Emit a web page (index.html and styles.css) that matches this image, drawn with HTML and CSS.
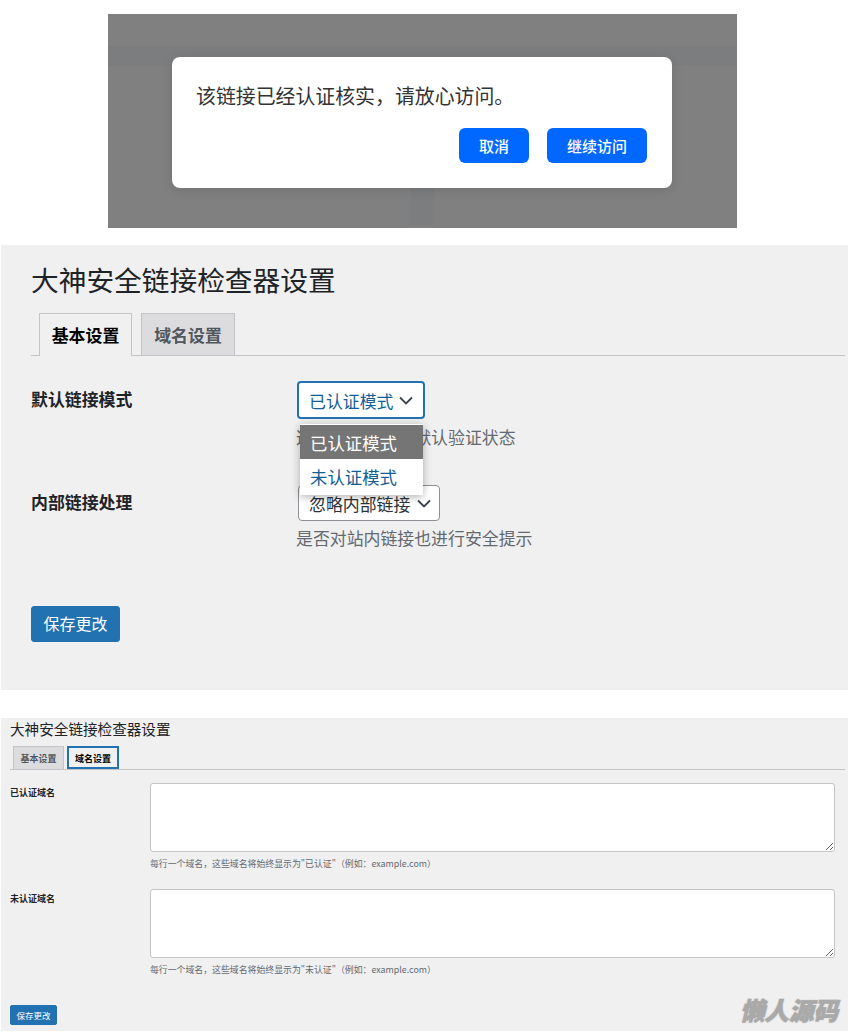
FILE: index.html
```html
<!DOCTYPE html>
<html lang="zh-CN">
<head>
<meta charset="utf-8">
<title>大神安全链接检查器设置</title>
<link rel="stylesheet" href="styles.css">
</head>
<body>
<section class="modal-shot">
  <div class="modal-band"></div>
  <div class="modal-stub"></div>
  <div class="dialog">
    <p class="dialog-text">该链接已经认证核实，请放心访问。</p>
    <div class="dialog-actions">
      <button class="dialog-btn btn-cancel">取消</button>
      <button class="dialog-btn btn-go">继续访问</button>
    </div>
  </div>
</section>

<section class="panel panel-basic">
  <h1 class="title">大神安全链接检查器设置</h1>
  <nav class="tabs">
    <a class="tab tab-active">基本设置</a>
    <a class="tab tab-idle">域名设置</a>
  </nav>
  <div class="row row-first">
    <div class="label">默认链接模式</div>
    <div class="field">
      <div class="select select-focus">已认证模式
        <svg class="chev" viewBox="0 0 16 16"><path d="M2 5.5 8 11.5l6-6" fill="none" stroke="#3c434a" stroke-width="1.8"/></svg>
      </div>
      <p class="desc desc-first">这将决定链接的默认验证状态</p>
      <div class="menu">
        <div class="menu-item menu-selected">已认证模式</div>
        <div class="menu-item">未认证模式</div>
      </div>
    </div>
  </div>
  <div class="row row-second">
    <div class="label label-second">内部链接处理</div>
    <div class="field">
      <div class="select select-plain">忽略内部链接
        <svg class="chev" viewBox="0 0 16 16"><path d="M2 5.5 8 11.5l6-6" fill="none" stroke="#3c434a" stroke-width="1.8"/></svg>
      </div>
      <p class="desc desc-second">是否对站内链接也进行安全提示</p>
    </div>
  </div>
  <button class="save">保存更改</button>
</section>

<section class="panel panel-domain">
  <h2 class="title-sm">大神安全链接检查器设置</h2>
  <nav class="tabs-sm">
    <a class="tab-sm">基本设置</a>
    <a class="tab-sm tab-sm-active">域名设置</a>
  </nav>
  <div class="row-sm row-sm-first">
    <div class="label-sm">已认证域名</div>
    <div class="field-sm">
      <textarea class="area"></textarea>
      <p class="desc-sm">每行一个域名，这些域名将始终显示为"已认证"（例如：example.com）</p>
    </div>
  </div>
  <div class="row-sm">
    <div class="label-sm">未认证域名</div>
    <div class="field-sm">
      <textarea class="area"></textarea>
      <p class="desc-sm">每行一个域名，这些域名将始终显示为"未认证"（例如：example.com）</p>
    </div>
  </div>
  <button class="save-sm">保存更改</button>
  <div class="watermark">懒人源码</div>
</section>
</body>
</html>
```
FILE: styles.css
```css
* { box-sizing: border-box; }
html, body { margin: 0; padding: 0; }
body {
  width: 850px;
  height: 1035px;
  overflow: hidden;
  background: #fff;
  font-family: "Noto Sans CJK SC", "Noto Sans", sans-serif;
  color: #1d2327;
}
p, h1, h2 { margin: 0; font-weight: 400; }

/* top modal shot */
.modal-shot {
  position: relative;
  width: 629px;
  height: 214px;
  padding-top: 32px;
  margin: 14px 0 0 108px;
  background: #808080;
  overflow: hidden;
}
.modal-band { height: 20px; background: #7c7d7e; }
.modal-stub { position: absolute; left: 302px; top: 170px; width: 24px; height: 41px; background: #7c7d7e; }
.dialog {
  position: absolute;
  left: 64px;
  top: 43px;
  width: 500px;
  height: 131px;
  padding: 24px 25px 0 24px;
  background: #fff;
  border-radius: 8px;
  box-shadow: 0 2px 12px rgba(0,0,0,.12);
}
.dialog-text { font-size: 19.9px; line-height: 30px; color: #333; }
.dialog-actions { display: flex; justify-content: flex-end; gap: 18px; margin-top: 17px; }
.dialog-btn {
  height: 35px;
  padding: 0;
  border: 0;
  border-radius: 6px;
  background: #0068ff;
  color: #fff;
  font: 500 15px/35px "Noto Sans CJK SC", sans-serif;
}
.btn-cancel { width: 70px; }
.btn-go { width: 100px; }

/* panels */
.panel { position: relative; background: #f0f0f1; margin-left: 1px; width: 847px; }
.panel-basic { height: 445px; margin-top: 17px; padding: 14px 0 0 30px; }
.title { font-size: 27.7px; line-height: 40px; color: #1d2327; }
.tabs {
  display: flex;
  gap: 9px;
  height: 43px;
  margin: 14px 3px 0 0;
  padding-left: 8px;
  border-bottom: 1px solid #c3c4c7;
}
.tab {
  height: 42px;
  border: 1px solid #c3c4c7;
  border-bottom: 0;
  color: #50575e;
  font-size: 16.9px;
  font-weight: 700;
  line-height: 41px;
  text-align: center;
}
.tab-idle { width: 94px; background: #dcdcde; }
.tab-active { width: 93px; height: 43px; background: #f0f0f1; color: #000; }
.row { display: grid; grid-template-columns: 266px 1fr; }
.row-first { margin-top: 25px; height: 104px; }
.row-second { height: 121px; }
.label { font-size: 16.9px; font-weight: 700; line-height: 36px; color: #1d2327; }
.label-second { line-height: 34px; }
.field { position: relative; }
.select {
  display: flex;
  align-items: center;
  justify-content: space-between;
  background: #fff;
  font-size: 16.9px;
  border-radius: 4px;
}
.select-focus {
  width: 128px;
  height: 38px;
  padding: 0 9px 0 10px;
  border: 2px solid #2271b1;
  color: #135e96;
}
.select-plain {
  width: 142px;
  height: 36px;
  margin-left: 1px;
  padding: 0 7px 0 10px;
  border: 1px solid #8c8f94;
  color: #2c3338;
}
.chev { width: 16px; height: 16px; flex: none; }
.desc { font-size: 16.9px; line-height: 24px; color: #646970; margin-left: -1px; }
.desc-first { margin-top: 6px; }
.desc-second { margin-top: 5px; }
.menu {
  position: absolute;
  z-index: 2;
  left: 3px;
  top: 43px;
  width: 123px;
  background: #fff;
  box-shadow: 0 2px 8px rgba(0,0,0,.3);
  padding-top: 1px;
}
.menu-item { height: 36px; padding-left: 10px; font-size: 17.4px; line-height: 36px; color: #135e96; }
.menu-selected { height: 34px; background: #757575; color: #fff; line-height: 36px; }
.save {
  display: block;
  width: 89px;
  height: 36px;
  padding: 0 0 2px;
  border: 1px solid #2271b1;
  border-radius: 3px;
  background: #2271b1;
  color: #fff;
  font: 400 16px/32px "Noto Sans CJK SC", sans-serif;
}

.panel-domain { height: 313px; margin-top: 28px; padding: 0 0 0 9px; }
.title-sm { font-size: 14.6px; line-height: 22px; color: #1d2327; }
.tabs-sm {
  display: flex;
  gap: 3px;
  height: 24px;
  margin: 6px 3px 0 0;
  padding-left: 3px;
  border-bottom: 1px solid #c3c4c7;
}
.tab-sm {
  width: 51px;
  height: 23px;
  border: 1px solid #c3c4c7;
  border-bottom: 0;
  background: #dcdcde;
  color: #50575e;
  font-size: 9px;
  font-weight: 700;
  line-height: 24px;
  text-align: center;
}
.tab-sm-active {
  width: 52px;
  border: 2px solid #2271b1;
  background: #f0f0f1;
  color: #000;
  line-height: 21px;
}
.row-sm { display: grid; grid-template-columns: 140px 1fr; height: 106px; }
.row-sm-first { margin-top: 13px; }
.label-sm { font-size: 9px; font-weight: 700; line-height: 20px; color: #1d2327; }
.field-sm { display: flex; flex-direction: column; }
.area {
  display: block;
  width: 685px;
  height: 69px;
  border: 1px solid #c3c4c7;
  border-radius: 3px;
  background: #fff;
  outline: 0;
}
.desc-sm { margin-top: 5px; font-size: 8.9px; line-height: 14px; color: #646970; }
.save-sm {
  display: block;
  width: 47px;
  height: 20px;
  margin-top: 10px;
  padding: 0;
  border: 1px solid #2271b1;
  border-radius: 2px;
  background: #2271b1;
  color: #fff;
  font: 400 8.5px/18px "Noto Sans CJK SC", sans-serif;
}
.watermark {
  position: absolute;
  right: 10px;
  bottom: 6px;
  font-size: 24.5px;
  line-height: 30px;
  font-weight: 900;
  font-style: italic;
  color: #a9a9a9;
  -webkit-text-stroke: 0.7px #a9a9a9;
  text-shadow: 1px 1px 0 #e6e6e6, -1px -1px 0 #e6e6e6, 1px -1px 0 #e6e6e6, -1px 1px 0 #e6e6e6;
}
```
